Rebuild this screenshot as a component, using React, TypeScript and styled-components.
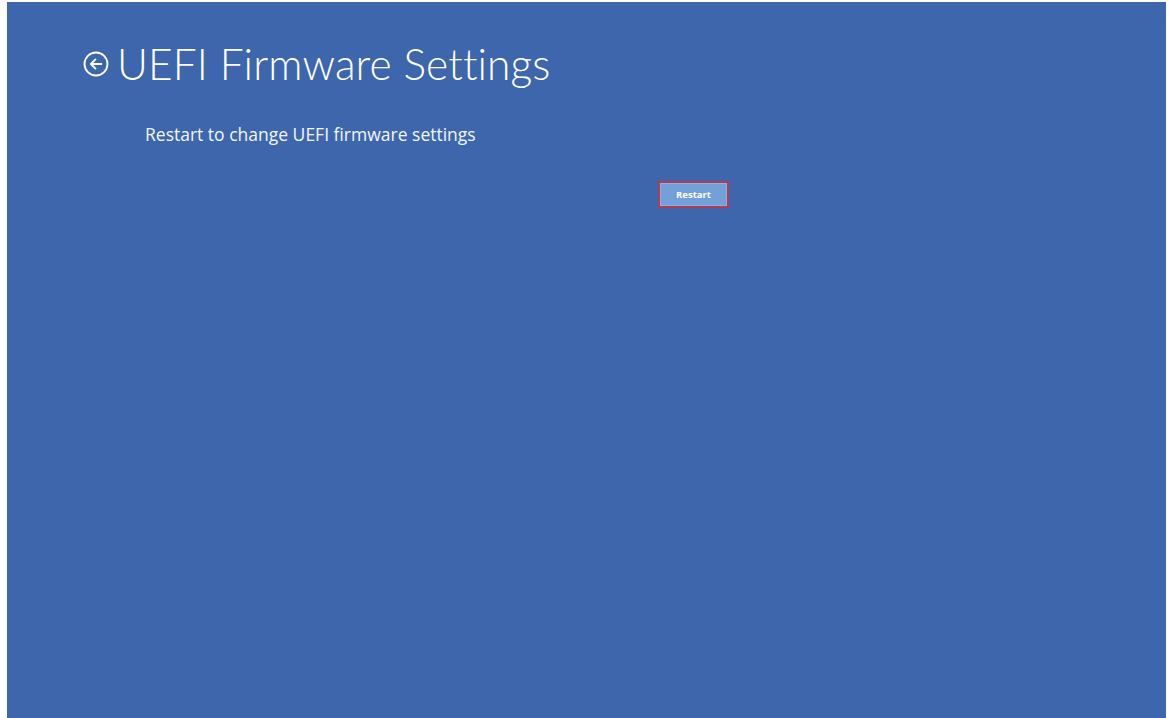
import React from "react";
import styled, { createGlobalStyle } from "styled-components";

const Global = createGlobalStyle`
  html, body { margin: 0; padding: 0; background: #ffffff; }
  #root { width: 1170px; height: 718px; overflow: hidden; }
`;

const Screen = styled.div`
  margin: 2px 0 0 7px;
  width: 1159px;
  height: 716px;
  background: #3d66ad;
  display: flex;
  flex-direction: column;
  font-family: "Open Sans", "Noto Sans", sans-serif;
  color: #ffffff;
`;

const Header = styled.div`
  display: flex;
  align-items: center;
  gap: 8px;
  padding: 35px 0 0 76px;
  height: 54px;
`;

const BackButton = styled.button`
  width: 26px;
  height: 26px;
  padding: 0;
  border: none;
  background: none;
  display: flex;
  align-items: center;
  justify-content: center;
  color: #ffffff;
`;

const Title = styled.h1`
  margin: 0;
  font-family: "Lato", "Open Sans", sans-serif;
  font-size: 42.5px;
  font-weight: 300;
  letter-spacing: 0.1px;
  line-height: 54px;
`;

const Body = styled.div`
  display: flex;
  flex-direction: column;
  padding: 31px 0 0 138px;
`;

const Subtitle = styled.p`
  margin: 0;
  font-size: 17.5px;
  font-weight: 400;
  line-height: 24px;
  color: #f2f5fb;
`;

const ButtonRow = styled.div`
  display: flex;
  padding: 35px 0 0 651px;
`;

const RestartButton = styled.button`
  width: 71px;
  height: 27px;
  box-sizing: border-box;
  border: 2px solid #b33a55;
  background: #74a0d9;
  color: #ffffff;
  font-family: "Open Sans", "Noto Sans", sans-serif;
  font-size: 9.5px;
  font-weight: 700;
  padding: 0;
  box-shadow: inset 0 0 0 1px #8ab1e2;
`;

export default function App() {
  return (
    <>
      <Global />
      <Screen>
        <Header>
          <BackButton aria-label="Back">
            <svg width="26" height="26" viewBox="0 0 24 24" fill="none">
              <circle cx="12" cy="12" r="10.6" stroke="#fff" strokeWidth="1.7" />
              <path
                d="M17 12H7.5M11.5 7.8L7.3 12l4.2 4.2"
                stroke="#fff"
                strokeWidth="1.7"
                strokeLinecap="round"
                strokeLinejoin="round"
              />
            </svg>
          </BackButton>
          <Title>UEFI Firmware Settings</Title>
        </Header>
        <Body>
          <Subtitle>Restart to change UEFI firmware settings</Subtitle>
        </Body>
        <ButtonRow>
          <RestartButton>Restart</RestartButton>
        </ButtonRow>
      </Screen>
    </>
  );
}
